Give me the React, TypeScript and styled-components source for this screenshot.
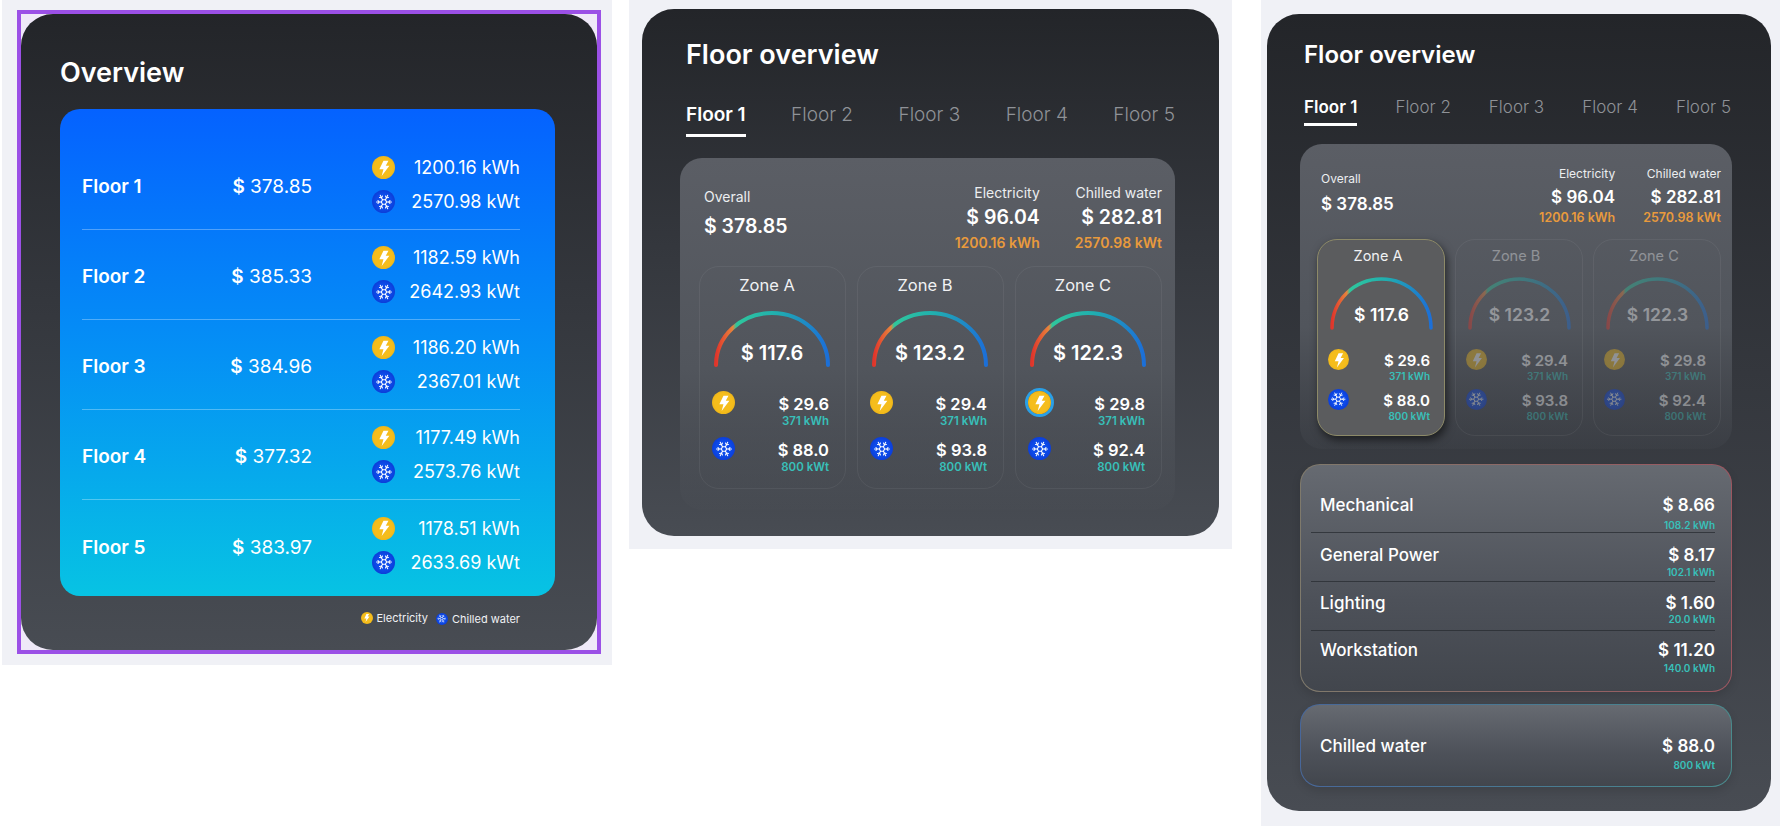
import React from "react";
import styled, { createGlobalStyle, css } from "styled-components";
import { Snowflake } from "lucide-react";

const Global = createGlobalStyle`
  html, body { margin: 0; padding: 0; background: #fff; }
  body { font-family: Inter, "Liberation Sans", sans-serif; color: #fff; -webkit-font-smoothing: antialiased; }
`;

const Page = styled.div`
  display: flex;
  align-items: flex-start;
  width: 1780px;
  height: 826px;
  overflow: hidden;
  padding-left: 2px;
  box-sizing: border-box;
`;

const Frame = styled.section<{ $w: number; $h: number; $ml: number; $pad: string }>`
  flex: none;
  box-sizing: border-box;
  width: ${(p) => p.$w}px;
  height: ${(p) => p.$h}px;
  margin-left: ${(p) => p.$ml}px;
  padding: ${(p) => p.$pad};
  background: #f0f1f6;
`;

const Selected = styled.div`
  box-sizing: border-box;
  height: 100%;
  border: 4px solid #9b50e6;
  background: #efe9f8;
`;

const Card = styled.div<{ $pad: string }>`
  box-sizing: border-box;
  height: 100%;
  padding: ${(p) => p.$pad};
  border-radius: 32px;
  background: linear-gradient(180deg, #232529 0%, #34373d 45%, #484c53 100%);
`;

const Title = styled.h2<{ $size: number }>`
  margin: 0;
  font-size: ${(p) => p.$size}px;
  line-height: ${(p) => Math.round(p.$size * 1.22)}px;
  font-weight: 600;
  color: #fff;
`;

/* overview */
const BlueCard = styled.div`
  margin: 20px 0 0 0;
  width: 495px;
  height: 487px;
  box-sizing: border-box;
  padding: 31px 35px 0 22px;
  border-radius: 20px;
  background: linear-gradient(180deg, #0562ff 0%, #0590f5 50%, #07c3e3 100%);
`;

const FloorRow = styled.div`
  display: grid;
  grid-template-columns: 100px 130px 1fr;
  align-items: center;
  height: 90px;
  box-sizing: border-box;
  border-bottom: 1px solid rgba(255, 255, 255, 0.3);
  &:last-child { border-bottom: none; }
`;

const FloorName = styled.div`
  padding-top: 4px;
  font-size: 19px;
  font-weight: 600;
`;

const FloorPrice = styled.div`
  padding-top: 4px;
  font-size: 19px;
  font-weight: 400;
  text-align: right;
  white-space: nowrap;
`;

const Dollar = styled.span`
  font-weight: 600;
`;

const Energy = styled.div`
  margin-left: 60px;
  display: flex;
  flex-direction: column;
  gap: 12px;
`;

const EnergyLine = styled.div`
  display: flex;
  align-items: center;
  justify-content: space-between;
  font-size: 18px;
  height: 22px;
  white-space: nowrap;
`;

const Legend = styled.div`
  display: flex;
  justify-content: flex-end;
  align-items: center;
  gap: 8px;
  margin: 15px 37px 0 0;
  font-size: 11px;
  color: #f0f1f4;
`;

const LegendItem = styled.span<{ $drop?: boolean }>`
  display: inline-flex;
  align-items: center;
  gap: 4px;
  transform: translateY(${(p) => (p.$drop ? 1 : 0)}px);
`;

/* coin icons */
const CoinBox = styled.span<{ $kind: "bolt" | "snow"; $size: number; $ring?: boolean }>`
  flex: none;
  display: inline-flex;
  align-items: center;
  justify-content: center;
  box-sizing: content-box;
  width: ${(p) => p.$size}px;
  height: ${(p) => p.$size}px;
  border-radius: 50%;
  color: #fff;
  background: ${(p) =>
    p.$kind === "bolt"
      ? "radial-gradient(circle, #f5bd1c 55%, #e3a912 100%)"
      : "radial-gradient(circle, #0d4bea 45%, #0a2fc4 100%)"};
  ${(p) =>
    p.$ring &&
    css`
      box-shadow: 0 0 0 3px #2a9fe6;
    `}
`;

const Coin = ({ kind, size, ring }: { kind: "bolt" | "snow"; size: number; ring?: boolean }) => (
  <CoinBox $kind={kind} $size={size} $ring={ring}>
    {kind === "bolt" ? (
      <svg width={size * 0.95} height={size * 0.95} viewBox="0 0 24 24">
        <path d="M11.5 4 L17 4 L14 9.5 L18 9.5 L9.5 21 L11.5 13.5 L7 13.5 Z" fill="#fff" />
      </svg>
    ) : (
      <Snowflake size={size * 0.78} strokeWidth={1.4} />
    )}
  </CoinBox>
);

/* floor detail */
const Tabs = styled.nav<{ $mt: number; $compact?: boolean }>`
  display: flex;
  justify-content: space-between;
  margin-top: ${(p) => p.$mt}px;
  font-size: ${(p) => (p.$compact ? 17 : 19)}px;
  line-height: ${(p) => (p.$compact ? 20 : 22)}px;
`;

const Tab = styled.span<{ $active?: boolean; $compact?: boolean }>`
  padding-bottom: ${(p) => (p.$compact ? 6 : 8)}px;
  border-bottom: 3px solid ${(p) => (p.$active ? "#fff" : "transparent")};
  color: ${(p) => (p.$active ? "#fff" : "#8f9297")};
  font-weight: ${(p) => (p.$active ? 600 : 300)};
  white-space: nowrap;
`;

const Inner = styled.div<{ $compact?: boolean }>`
  box-sizing: border-box;
  border-radius: 22px;
  background: linear-gradient(180deg, #5b5e65 0%, #51555c 60%, rgba(78, 82, 89, 0.15) 100%);
  ${(p) =>
    p.$compact
      ? css`
          margin: 18px 0 0 -4px;
          width: 432px;
          padding: 22px 11px 13px 17px;
        `
      : css`
          margin: 21px 0 0 -6px;
          width: 495px;
          padding: 26px 13px 21px 19px;
        `}
`;

const Summary = styled.div<{ $compact?: boolean }>`
  display: grid;
  grid-template-columns: 1fr auto auto;
  column-gap: ${(p) => (p.$compact ? 28 : 35)}px;
`;

const SumBlock = styled.div<{ $left?: boolean; $compact?: boolean }>`
  text-align: ${(p) => (p.$left ? "left" : "right")};
  ${(p) =>
    p.$left &&
    css`
      padding: ${p.$compact ? 5 : 4}px 0 0 ${p.$compact ? 4 : 5}px;
    `}
`;

const SumLabel = styled.div<{ $compact?: boolean }>`
  font-size: ${(p) => (p.$compact ? 12 : 14)}px;
  line-height: ${(p) => (p.$compact ? 16 : 18)}px;
  color: #eceef0;
`;

const SumValue = styled.div<{ $compact?: boolean; $big?: boolean }>`
  margin-top: ${(p) => (p.$big ? (p.$compact ? 6 : 7) : p.$compact ? 4 : 2)}px;
  font-size: ${(p) => (p.$compact ? 17 : 19.5)}px;
  line-height: ${(p) => (p.$compact ? 22 : 26)}px;
  font-weight: 600;
  white-space: nowrap;
`;

const SumSub = styled.div<{ $compact?: boolean }>`
  margin-top: ${(p) => (p.$compact ? 3 : 5)}px;
  font-size: ${(p) => (p.$compact ? 12.5 : 14)}px;
  line-height: ${(p) => (p.$compact ? 14 : 16)}px;
  font-weight: 600;
  color: #e99a3c;
  white-space: nowrap;
`;

const Zones = styled.div<{ $compact?: boolean }>`
  display: grid;
  grid-template-columns: repeat(3, minmax(0, 1fr));
  column-gap: ${(p) => (p.$compact ? 10 : 11)}px;
  margin-top: ${(p) => (p.$compact ? 14 : 15)}px;
`;

const ZoneCard = styled.div<{ $compact?: boolean; $active?: boolean }>`
  box-sizing: border-box;
  height: ${(p) => (p.$compact ? 197 : 223)}px;
  border-radius: 20px;
  border: 1px solid rgba(255, 255, 255, 0.06);
  padding: ${(p) => (p.$compact ? "6px 11px 0 12px" : "7px 15px 0 14px")};
  ${(p) =>
    p.$active &&
    css`
      border: 1px solid #8d8a68;
      background: #5b5c5e;
      box-shadow: 2px 4px 8px rgba(0, 0, 0, 0.55);
    `}
`;

const ZoneBody = styled.div<{ $dim?: boolean }>`
  opacity: ${(p) => (p.$dim ? 0.38 : 1)};
`;

const ZoneName = styled.div<{ $compact?: boolean }>`
  padding-right: ${(p) => (p.$compact ? 7 : 10)}px;
  text-align: center;
  font-size: ${(p) => (p.$compact ? 14.5 : 16.5)}px;
  line-height: ${(p) => (p.$compact ? 20 : 22)}px;
  color: #f0f1f3;
`;

const GaugeWrap = styled.div<{ $compact?: boolean }>`
  position: relative;
  width: ${(p) => (p.$compact ? 103 : 116)}px;
  height: ${(p) => (p.$compact ? 52 : 55)}px;
  margin: ${(p) => (p.$compact ? "11px auto 0" : "15px auto 0")};
  svg { display: block; overflow: visible; }
`;

const GaugeValue = styled.div<{ $compact?: boolean }>`
  position: absolute;
  left: 0;
  right: 0;
  top: ${(p) => (p.$compact ? 27 : 30)}px;
  text-align: center;
  font-size: ${(p) => (p.$compact ? 17.5 : 20)}px;
  line-height: ${(p) => (p.$compact ? 22 : 24)}px;
  font-weight: 600;
  white-space: nowrap;
`;

const ZoneRows = styled.div<{ $compact?: boolean }>`
  display: flex;
  flex-direction: column;
  gap: ${(p) => (p.$compact ? 8 : 11)}px;
  margin-top: ${(p) => (p.$compact ? 22 : 27)}px;
`;

const ZoneRow = styled.div<{ $compact?: boolean }>`
  display: flex;
  justify-content: space-between;
  align-items: flex-start;
  padding-right: ${(p) => (p.$compact ? 3 : 1)}px;
  & > span:first-child {
    margin-top: -2px;
    margin-left: -2px;
  }
`;

const ZoneValues = styled.div`
  text-align: right;
`;

const ZoneValue = styled.div<{ $compact?: boolean }>`
  font-size: ${(p) => (p.$compact ? 15 : 16.5)}px;
  line-height: ${(p) => (p.$compact ? 20 : 22)}px;
  font-weight: 600;
  white-space: nowrap;
`;

const TealSub = styled.div<{ $size: number; $mt?: number }>`
  margin-top: ${(p) => p.$mt ?? 0}px;
  font-size: ${(p) => p.$size}px;
  line-height: 14px;
  font-weight: 600;
  color: #38c0ba;
  white-space: nowrap;
`;

const CostPanel = styled.div<{ $from: string; $to: string; $mt: number; $h: number; $pt: number }>`
  box-sizing: border-box;
  margin: ${(p) => p.$mt}px 0 0 -4px;
  width: 432px;
  height: ${(p) => p.$h}px;
  padding: ${(p) => p.$pt}px 16px 0 10px;
  border-radius: 20px;
  border: 1px solid transparent;
  background:
    linear-gradient(180deg, #666a71 0%, #4d5159 60%, #42464d 100%) padding-box,
    linear-gradient(90deg, ${(p) => p.$from}, ${(p) => p.$to}) border-box;
  box-shadow: 0 4px 10px rgba(0, 0, 0, 0.12);
`;

const CostRow = styled.div<{ $pt: number; $h: number }>`
  display: flex;
  justify-content: space-between;
  align-items: flex-start;
  box-sizing: border-box;
  height: ${(p) => p.$h}px;
  padding: ${(p) => p.$pt}px 0 0 9px;
  border-bottom: 1px solid rgba(40, 44, 50, 0.75);
  &:last-child { border-bottom: none; }
`;

const CostName = styled.div`
  font-size: 17px;
  line-height: 22px;
  font-weight: 500;
`;

const CostRight = styled.div`
  text-align: right;
`;

const CostValue = styled.div`
  font-size: 17px;
  line-height: 22px;
  font-weight: 600;
`;

type Zone = { name: string; total: string; a: string; b: string };

const Gauge = ({ id, compact, value }: { id: string; compact?: boolean; value: string }) => {
  const w = compact ? 103 : 116;
  const h = compact ? 52 : 55;
  const r = w / 2 - 2;
  return (
    <GaugeWrap $compact={compact}>
      <svg width={w} height={h} viewBox={`0 0 ${w} ${h}`}>
        <defs>
          <linearGradient id={id} x1="0" y1="0" x2="1" y2="0">
            <stop offset="0" stopColor="#e0352b" />
            <stop offset="0.15" stopColor="#e8843c" />
            <stop offset="0.18" stopColor="#2fc79c" />
            <stop offset="0.55" stopColor="#20aeb0" />
            <stop offset="1" stopColor="#1c6fd8" />
          </linearGradient>
        </defs>
        <path
          d={`M2 ${h - 1} A ${r} ${h - 3} 0 0 1 ${w - 2} ${h - 1}`}
          fill="none"
          stroke={`url(#${id})`}
          strokeWidth={compact ? 3.5 : 4}
          strokeLinecap="round"
        />
      </svg>
      <GaugeValue $compact={compact}>{value}</GaugeValue>
    </GaugeWrap>
  );
};

const floors = [
  ["Floor 1", "378.85", "1200.16 kWh", "2570.98 kWt"],
  ["Floor 2", "385.33", "1182.59 kWh", "2642.93 kWt"],
  ["Floor 3", "384.96", "1186.20 kWh", "2367.01 kWt"],
  ["Floor 4", "377.32", "1177.49 kWh", "2573.76 kWt"],
  ["Floor 5", "383.97", "1178.51 kWh", "2633.69 kWt"],
];

const zones2: Zone[] = [
  { name: "Zone A", total: "$ 117.6", a: "$ 29.6", b: "$ 88.0" },
  { name: "Zone B", total: "$ 123.2", a: "$ 29.4", b: "$ 93.8" },
  { name: "Zone C", total: "$ 122.3", a: "$ 29.8", b: "$ 92.4" },
];

const ZoneTile = ({ z, compact, active, dim, ring, id }: { z: Zone; compact?: boolean; active?: boolean; dim?: boolean; ring?: boolean; id: string }) => {
  const coin = compact ? 21 : 23;
  const sub = compact ? 10 : 11.5;
  const subMt = compact ? -2 : -1;
  return (
    <ZoneCard $compact={compact} $active={active}>
      <ZoneBody $dim={dim}>
        <ZoneName $compact={compact}>{z.name}</ZoneName>
        <Gauge id={id} compact={compact} value={z.total} />
        <ZoneRows $compact={compact}>
          <ZoneRow $compact={compact}>
            <Coin kind="bolt" size={coin} ring={ring} />
            <ZoneValues>
              <ZoneValue $compact={compact}>{z.a}</ZoneValue>
              <TealSub $size={sub} $mt={subMt}>371 kWh</TealSub>
            </ZoneValues>
          </ZoneRow>
          <ZoneRow $compact={compact}>
            <Coin kind="snow" size={coin} />
            <ZoneValues>
              <ZoneValue $compact={compact}>{z.b}</ZoneValue>
              <TealSub $size={sub} $mt={subMt}>800 kWt</TealSub>
            </ZoneValues>
          </ZoneRow>
        </ZoneRows>
      </ZoneBody>
    </ZoneCard>
  );
};

const Detail = ({ compact }: { compact?: boolean }) => (
  <>
    <Title $size={compact ? 24 : 27}>Floor overview</Title>
    <Tabs $mt={compact ? 28 : 33} $compact={compact}>
      {["Floor 1", "Floor 2", "Floor 3", "Floor 4", "Floor 5"].map((t, i) => (
        <Tab key={t} $active={i === 0} $compact={compact}>
          {t}
        </Tab>
      ))}
    </Tabs>
    <Inner $compact={compact}>
      <Summary $compact={compact}>
        <SumBlock $left $compact={compact}>
          <SumLabel $compact={compact}>Overall</SumLabel>
          <SumValue $compact={compact} $big>$ 378.85</SumValue>
        </SumBlock>
        <SumBlock $compact={compact}>
          <SumLabel $compact={compact}>Electricity</SumLabel>
          <SumValue $compact={compact}>$ 96.04</SumValue>
          <SumSub $compact={compact}>1200.16 kWh</SumSub>
        </SumBlock>
        <SumBlock $compact={compact}>
          <SumLabel $compact={compact}>Chilled water</SumLabel>
          <SumValue $compact={compact}>$ 282.81</SumValue>
          <SumSub $compact={compact}>2570.98 kWt</SumSub>
        </SumBlock>
      </Summary>
      <Zones $compact={compact}>
        {zones2.map((z, i) => (
          <ZoneTile
            key={z.name}
            id={`g-${compact ? "c" : "r"}-${i}`}
            z={z}
            compact={compact}
            active={compact && i === 0}
            dim={compact && i > 0}
            ring={!compact && i === 2}
          />
        ))}
      </Zones>
    </Inner>
  </>
);

const costs: { name: string; value: string; sub: string; pt: number; h: number; mt: number }[] = [
  { name: "Mechanical", value: "$ 8.66", sub: "108.2 kWh", pt: 11, h: 50, mt: 2 },
  { name: "General Power", value: "$ 8.17", sub: "102.1 kWh", pt: 11, h: 49, mt: -1 },
  { name: "Lighting", value: "$ 1.60", sub: "20.0 kWh", pt: 10, h: 49, mt: -2 },
  { name: "Workstation", value: "$ 11.20", sub: "140.0 kWh", pt: 8, h: 49, mt: 0 },
];

export default function App() {
  return (
    <Page>
      <Global />
      <Frame $w={610} $h={665} $ml={0} $pad="10px 11px 11px 15px">
        <Selected>
          <Card $pad="42px 40px 0 39px">
            <Title $size={27}>Overview</Title>
            <BlueCard>
              {floors.map((f) => (
                <FloorRow key={f[0]}>
                  <FloorName>{f[0]}</FloorName>
                  <FloorPrice>
                    <Dollar>$</Dollar> {f[1]}
                  </FloorPrice>
                  <Energy>
                    <EnergyLine>
                      <Coin kind="bolt" size={23} />
                      <span>{f[2]}</span>
                    </EnergyLine>
                    <EnergyLine>
                      <Coin kind="snow" size={23} />
                      <span>{f[3]}</span>
                    </EnergyLine>
                  </Energy>
                </FloorRow>
              ))}
            </BlueCard>
            <Legend>
              <LegendItem>
                <Coin kind="bolt" size={12} />
                Electricity
              </LegendItem>
              <LegendItem $drop>
                <Coin kind="snow" size={12} />
                Chilled water
              </LegendItem>
            </Legend>
          </Card>
        </Selected>
      </Frame>
      <Frame $w={603} $h={549} $ml={17} $pad="9px 13px 13px 13px">
        <Card $pad="29px 44px 0 44px">
          <Detail />
        </Card>
      </Frame>
      <Frame $w={519} $h={826} $ml={29} $pad="14px 9px 15px 6px">
        <Card $pad="26px 40px 0 37px">
          <Detail compact />
          <CostPanel $from="#7f7a6c" $to="#9c5660" $mt={15} $h={228} $pt={18}>
            {costs.map((c) => (
              <CostRow key={c.name} $pt={c.pt} $h={c.h}>
                <CostName>{c.name}</CostName>
                <CostRight>
                  <CostValue>{c.value}</CostValue>
                  <TealSub $size={10} $mt={c.mt}>{c.sub}</TealSub>
                </CostRight>
              </CostRow>
            ))}
          </CostPanel>
          <CostPanel $from="#48679a" $to="#4a8a8c" $mt={12} $h={83} $pt={20}>
            <CostRow $pt={10} $h={49}>
              <CostName>Chilled water</CostName>
              <CostRight>
                <CostValue>$ 88.0</CostValue>
                <TealSub $size={10} $mt={1}>800 kWt</TealSub>
              </CostRight>
            </CostRow>
          </CostPanel>
        </Card>
      </Frame>
    </Page>
  );
}
